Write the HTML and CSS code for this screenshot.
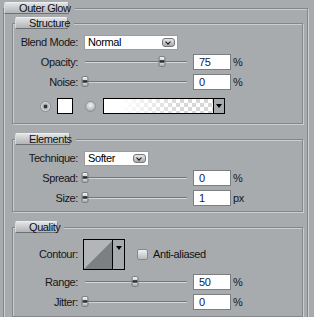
FILE: index.html
```html
<!DOCTYPE html>
<html lang="en">
<head>
  <meta charset="UTF-8">
  <title>Outer Glow</title>
  <link rel="stylesheet" href="styles.css">
</head>
<body>
  <div class="panel">
    <div class="tab"><span>Outer Glow</span></div>

    <div class="group structure">
      <div class="tab"><span>Structure</span></div>

      <div class="row">
        <label>Blend Mode:</label>
        <div class="select blend"><span>Normal</span><i class="drop"></i></div>
      </div>

      <div class="row">
        <label>Opacity:</label>
        <div class="slider"><div class="track"><div class="thumb" style="left: 75%"></div></div></div>
        <div class="field">75</div>
        <span class="unit">%</span>
      </div>

      <div class="row">
        <label>Noise:</label>
        <div class="slider"><div class="track"><div class="thumb" style="left: 0%"></div></div></div>
        <div class="field">0</div>
        <span class="unit">%</span>
      </div>

      <div class="swatches">
        <span class="radio checked"></span>
        <span class="color"></span>
        <span class="radio"></span>
        <div class="gradient">
          <div class="checker"></div>
          <div class="arrow"><i></i></div>
        </div>
      </div>
    </div>

    <div class="group elements">
      <div class="tab"><span>Elements</span></div>

      <div class="row">
        <label>Technique:</label>
        <div class="select technique"><span>Softer</span><i class="drop"></i></div>
      </div>

      <div class="row">
        <label>Spread:</label>
        <div class="slider"><div class="track"><div class="thumb" style="left: 0%"></div></div></div>
        <div class="field">0</div>
        <span class="unit">%</span>
      </div>

      <div class="row">
        <label>Size:</label>
        <div class="slider"><div class="track"><div class="thumb" style="left: 0%"></div></div></div>
        <div class="field">1</div>
        <span class="unit">px</span>
      </div>
    </div>

    <div class="group quality">
      <div class="tab"><span>Quality</span></div>

      <div class="row contour-row">
        <label>Contour:</label>
        <div class="contour-wrap">
          <div class="contour">
            <svg width="28" height="29" viewBox="0 0 28 29">
              <rect width="28" height="29" fill="#b3b5b8"/>
              <polygon points="1,28 28,1 28,29 0,29" fill="#7d8083"/>
            </svg>
            <div class="arrow"><i></i></div>
          </div>
          <span class="checkbox"></span>
          <span class="check-label">Anti-aliased</span>
        </div>
      </div>

      <div class="row">
        <label>Range:</label>
        <div class="slider"><div class="track"><div class="thumb" style="left: 49%"></div></div></div>
        <div class="field">50</div>
        <span class="unit">%</span>
      </div>

      <div class="row">
        <label>Jitter:</label>
        <div class="slider"><div class="track"><div class="thumb" style="left: 0%"></div></div></div>
        <div class="field">0</div>
        <span class="unit">%</span>
      </div>
    </div>
  </div>
</body>
</html>
```

FILE: styles.css
```css
:root {
  --bg: #a8abae;
  --text: #161616;
  --value: #12204a;
  --etch-dark: #83868a;
  --etch-light: #cbcdd0;
}

body {
  margin: 0;
  background-color: var(--bg);
  color: var(--text);
  font-family: "Liberation Sans", Arial, sans-serif;
  font-size: 11px;
  letter-spacing: -0.4px;
  line-height: 1;
  overflow: hidden;
}

.panel {
  margin: 8px 0 0 3px;
  width: 303px;
  height: 320px;
  border: 1px solid var(--etch-dark);
  box-shadow: inset 1px 1px 0 var(--etch-light), 1px 1px 0 var(--etch-light);
}

/* tab button sitting on a group's top line */
.tab {
  position: relative;
  z-index: 0;
  display: flex;
  width: fit-content;
  height: 12px;
  margin: -7px 0 -5px 0;
  padding-right: 4px;
  background-color: var(--bg);
}

.tab::before {
  content: "";
  position: absolute;
  z-index: -1;
  left: 0;
  right: 6px;
  top: 0;
  bottom: 0;
  box-sizing: border-box;
  border-top: 1px solid #eeeff0;
  border-left: 1px solid #d8d9db;
  border-right: 1px solid #8a8d90;
  border-bottom: 1px solid #6c6f73;
  border-radius: 2px 2px 0 0;
  background: linear-gradient(#e2e3e4, #c4c6c8 60%, #b2b4b7);
}

.tab span {
  padding-left: 15px;
  line-height: 12px;
  color: #101010;
}

.group {
  margin: 0 4px 0 8px;
  border: 1px solid var(--etch-dark);
  box-shadow: inset 1px 1px 0 var(--etch-light), 1px 1px 0 var(--etch-light);
}

.group .tab {
  margin: -7px 0 5px 2px;
}

.group .tab span {
  padding-left: 14px;
}

.structure {
  margin-top: 14px;
  padding-bottom: 9px;
}

.elements {
  margin-top: 15px;
  padding-bottom: 5px;
}

.quality {
  margin-top: 15px;
  padding-bottom: 6px;
}

.quality .tab {
  margin-bottom: 6px;
}

.row {
  display: grid;
  grid-template-columns: 65px 103px 38px auto;
  column-gap: 6px;
  align-items: center;
  height: 16px;
  margin-bottom: 4px;
}

.row:last-child {
  margin-bottom: 0;
}

.row label {
  text-align: right;
}

.elements .row:first-of-type,
.structure .row:first-of-type {
  height: 15px;
}

/* dropdowns */
.select {
  grid-column: 2 / span 3;
  display: flex;
  align-items: center;
  justify-content: space-between;
  box-sizing: border-box;
  height: 15px;
  padding: 0 2px 0 3px;
  background: #fff;
  border: 1px solid #9a9da0;
  color: #000;
}

.blend {
  width: 94px;
}

.technique {
  width: 65px;
}

.drop {
  position: relative;
  width: 13px;
  height: 9px;
  box-sizing: border-box;
  border: 1px solid #76797c;
  border-radius: 3px;
  background: linear-gradient(#e6e7e8, #a9abae);
}

.drop::after {
  content: "";
  position: absolute;
  left: 3px;
  top: 1px;
  width: 3px;
  height: 3px;
  border-right: 1.5px solid #111;
  border-bottom: 1.5px solid #111;
  transform: rotate(45deg);
}

/* sliders */
.slider {
  padding-left: 1px;
}

.track {
  position: relative;
  height: 0;
  border-top: 1px solid #74777a;
  border-bottom: 1px solid #d3d5d7;
}

.thumb {
  position: absolute;
  top: -6px;
  width: 7px;
  height: 11px;
  transform: translateX(-50%);
  box-sizing: border-box;
  border: 1px solid #7a7d80;
  border-radius: 2px;
  background: linear-gradient(#f4f4f4, #d2d3d4 35%, #222 40%, #3a3a3a 60%, #d9dadb 65%, #a3a5a8);
}

.field {
  box-sizing: border-box;
  height: 16px;
  padding-left: 5px;
  line-height: 14px;
  background: #fff;
  border: 1px solid #7c7f82;
  color: var(--value);
}

.unit {
  margin-left: -4px;
}

/* colour / gradient swatches */
.swatches {
  display: flex;
  align-items: center;
  height: 16px;
  margin-top: 8px;
  padding-left: 27px;
}

.radio {
  width: 11px;
  height: 11px;
  border-radius: 50%;
  box-sizing: border-box;
  border: 1px solid #8d9094;
  background: radial-gradient(circle at 50% 35%, #f2f2f2, #c3c5c7 55%, #8e9194);
}

.radio.checked {
  background: radial-gradient(circle, #333 0 1.5px, #9a9c9f 2px, #d9dadb 4px, #9a9da0 6px);
}

.color {
  width: 16px;
  height: 16px;
  box-sizing: border-box;
  margin: 0 12px 0 6px;
  background: #fff;
  border: 1px solid #000;
}

.gradient {
  display: flex;
  width: 122px;
  height: 16px;
  margin-left: 7px;
  box-sizing: border-box;
  border: 1px solid #000;
}

.checker {
  flex: 1;
  background:
    linear-gradient(to right, #fff 15%, rgba(255, 255, 255, 0) 70%),
    repeating-conic-gradient(#d7d7d7 0 25%, #fff 0 50%) 0 0 / 8px 8px;
}

.arrow {
  display: flex;
  justify-content: center;
  width: 10px;
  border-left: 1px solid #000;
  background: var(--bg);
}

.arrow i {
  margin-top: 5px;
  width: 0;
  height: 0;
  border-left: 3px solid transparent;
  border-right: 3px solid transparent;
  border-top: 4px solid #000;
}

/* contour */
.contour-row {
  height: 31px;
}

.contour-wrap {
  grid-column: 2 / span 3;
  display: flex;
  align-items: center;
  margin-left: -1px;
}

.contour {
  display: flex;
  width: 42px;
  height: 31px;
  box-sizing: border-box;
  border: 1px solid #000;
}

.contour .arrow {
  width: 11px;
}

.contour .arrow i {
  margin-top: 6px;
}

.checkbox {
  width: 11px;
  height: 11px;
  margin: 0 5px 0 12px;
  box-sizing: border-box;
  border: 1px solid #85888c;
  border-radius: 2px;
  background: linear-gradient(#f0f0f1, #b8babd);
}

.check-label {
  color: #101010;
}
```
